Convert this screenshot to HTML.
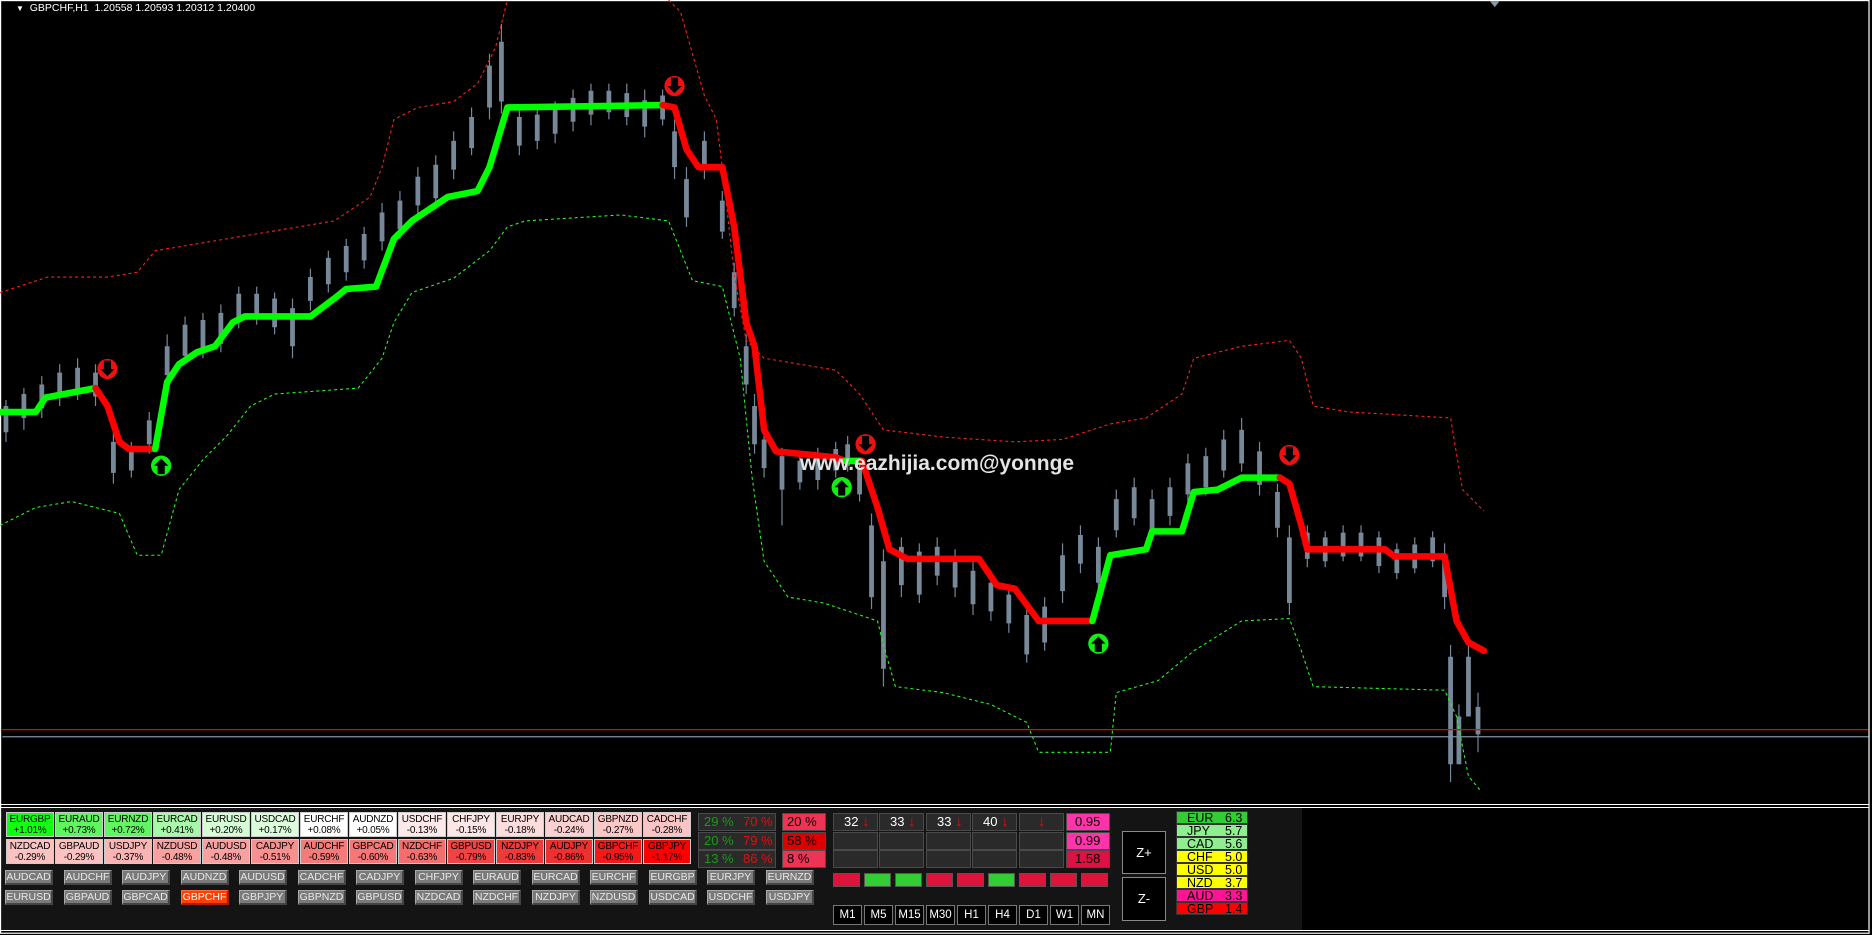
<!DOCTYPE html>
<html><head><meta charset="utf-8"><style>
*{margin:0;padding:0;box-sizing:border-box}
body{width:1872px;height:935px;background:#000;position:relative;overflow:hidden;font-family:"Liberation Sans",sans-serif}
.a{position:absolute}
.t{position:absolute;width:48px;height:25px;font-size:10px;line-height:11px;text-align:center;color:#000;padding-top:1px;border:1px solid #ccc;letter-spacing:-0.2px;white-space:nowrap;overflow:hidden}
.b{position:absolute;width:48px;height:15px;background:#7a7a7a;border-top:1px solid #aaa;border-left:1px solid #aaa;border-right:2px solid #444;border-bottom:2px solid #444;color:#e8e8e8;font-size:10.5px;line-height:12px;text-align:center}
.c{position:absolute;height:18px;border:1px solid #4a4a4a;background:#2a2a2a;font-size:13px;line-height:16px;color:#fff}
.sq{position:absolute;width:27px;height:14px;border:1px solid #555}
.tf{position:absolute;width:29px;height:20px;background:#000;border:1px solid #777;color:#fff;font-size:11.5px;line-height:18px;text-align:center}
.cr{position:absolute;left:1176px;width:72px;height:13px;border:1px solid #333;font-size:12.5px;line-height:12px;color:#000}
.cr span{position:absolute;left:10px}
.cr b{font-weight:normal;position:absolute;left:48px}
.ar{color:#f00;font-size:15px}
</style></head><body>
<svg class="a" style="left:0;top:0" width="1872" height="935" viewBox="0 0 1568 783" preserveAspectRatio="none">
<rect x="0.5" y="0.5" width="1565" height="781" fill="none" stroke="#fff" stroke-width="1"/>
<path d="M1248 1 L1256 1 L1252 6 Z" fill="#8899aa"/>
<g stroke="#778899" fill="none">
<path stroke-width="1" d="M5 335V370M20 325V360M35 315V350M50 305V340M65 300V335M80 305V340M95 360V405M110 370V400M125 345V380M140 280V320M155 265V305M170 262V300M185 255V295M200 240V275M215 240V272M230 245V280M245 250V300M260 225V260M275 210V245M290 200V235M305 190V225M320 170V210M335 160V200M350 140V180M365 130V175M380 110V150M395 90V130M410 45V100M420 20V95M435 90V130M450 90V125M465 85V120M480 75V110M495 70V105M510 70V100M525 70V105M540 75V115M555 75V105M565 100V150M575 140V190M590 110V150M605 160V200M615 220V265M625 280V330M632 330V380M640 360V400M655 375V440M670 380V410M685 375V410M700 370V400M710 365V395M720 385V420M730 430V510M740 460V575M755 450V500M770 455V505M785 450V490M800 460V500M815 470V515M830 480V520M845 490V530M860 505V555M875 500V545M890 455V505M905 440V480M920 450V495M935 410V450M950 400V440M965 410V450M980 400V440M995 380V420M1010 375V415M1025 360V400M1040 350V395M1055 370V415M1070 405V450M1080 440V515M1095 440V475M1110 445V475M1125 440V470M1140 440V470M1155 445V480M1170 455V485M1185 450V480M1200 445V475M1210 455V510M1215 540V655M1222 590V640M1230 540V600M1238 580V630"/>
<path stroke-width="4" d="M5 340V362M20 330V350M35 322V342M50 312V332M65 308V326M80 312V332M95 370V396M110 376V394M125 352V372M140 290V314M155 272V298M170 268V292M185 262V288M200 246V268M215 246V266M230 250V274M245 258V290M260 232V252M275 216V238M290 206V228M305 196V218M320 178V202M335 168V192M350 148V172M365 138V166M380 118V142M395 98V124M410 55V90M420 35V85M435 98V122M450 96V118M465 92V112M480 82V102M495 76V96M510 76V94M525 78V98M540 84V106M555 80V100M565 110V140M575 150V182M590 118V142M605 168V194M615 228V258M625 290V322M632 340V372M640 368V392M655 382V410M670 386V404M685 382V402M700 376V394M710 372V390M720 392V414M730 440V500M740 470V560M755 458V490M770 462V498M785 458V482M800 468V492M815 478V506M830 488V512M845 498V522M860 515V548M875 508V538M890 465V495M905 448V472M920 458V488M935 418V444M950 408V434M965 418V444M980 408V432M995 388V414M1010 382V408M1025 368V394M1040 360V388M1055 378V406M1070 412V442M1080 450V505M1095 446V468M1110 450V470M1125 446V466M1140 446V466M1155 450V474M1170 460V480M1185 456V476M1200 450V470M1210 465V500M1215 550V640M1222 600V640M1230 550V600M1238 592V615"/>
</g>
<polyline fill="none" stroke="#ff2020" stroke-width="0.9" stroke-dasharray="2.5,2.5" points="0,245 40,232 90,232 115,228 130,210 160,205 220,195 280,185 310,165 320,140 330,100 350,90 380,85 400,70 415,40 425,0"/>
<polyline fill="none" stroke="#ff2020" stroke-width="0.9" stroke-dasharray="2.5,2.5" points="560,0 570,10 590,80 600,100 605,140 615,230 625,285 640,300 700,310 720,330 740,360 790,366 850,370 890,368 930,355 960,350 990,330 1000,300 1040,290 1080,285 1090,300 1100,340 1130,345 1215,350 1225,410 1243,428"/>
<polyline fill="none" stroke="#20ff20" stroke-width="0.9" stroke-dasharray="2.5,2.5" points="0,440 30,425 60,420 100,430 115,465 135,465 150,410 170,385 190,365 210,340 230,330 300,325 320,300 330,270 345,245 380,233 410,210 425,190 440,185 520,180 560,185 570,210 580,235 605,240 620,300 630,400 640,470 660,500 690,505 735,520 740,540 750,575 790,580 830,590 860,605 870,630 930,630 935,580 970,570 1000,545 1040,520 1080,518 1090,545 1100,575 1210,578 1220,600 1230,650 1240,662"/>
<line x1="2" y1="611" x2="1565" y2="611" stroke="#ff0000" stroke-width="1"/>
<line x1="2" y1="617" x2="1565" y2="617" stroke="#8090a0" stroke-width="1"/>
<g fill="none" stroke-width="5.5" stroke-linejoin="round" stroke-linecap="round">
<polyline stroke="#00ff00" points="0,345 30,345 38,333 80,325"/>
<polyline stroke="#ff0000" points="80,325 90,340 100,370 108,376 130,376"/>
<polyline stroke="#00ff00" points="130,376 140,320 150,305 165,295 180,290 195,270 205,265 260,265 280,250 290,242 315,240 330,200 345,185 360,175 375,165 400,160 410,140 425,90 555,88"/>
<polyline stroke="#ff0000" points="555,88 565,90 575,125 585,140 605,140 615,190 625,270 632,290 640,360 650,378 700,383 708,386"/>
<polyline stroke="#00ff00" points="708,386 722,386"/>
<polyline stroke="#ff0000" points="722,386 735,425 745,460 760,468 820,468 835,490 850,493 870,520 915,520"/>
<polyline stroke="#00ff00" points="915,520 930,465 960,460 965,445 990,445 1000,412 1020,410 1040,400 1072,400"/>
<polyline stroke="#ff0000" points="1072,400 1080,405 1090,440 1095,460 1160,460 1168,466 1210,466 1220,520 1230,538 1243,545"/>
</g>
<g>
<circle cx="90" cy="309" r="8.5" fill="#ee1111"/><path d="M87 302h6v7h3l-6 6-6-6h3z" fill="#000"/>
<circle cx="565" cy="72" r="8.5" fill="#ee1111"/><path d="M562 65h6v7h3l-6 6-6-6h3z" fill="#000"/>
<circle cx="725" cy="372" r="8.5" fill="#ee1111"/><path d="M722 365h6v7h3l-6 6-6-6h3z" fill="#000"/>
<circle cx="1080" cy="381" r="8.5" fill="#ee1111"/><path d="M1077 374h6v7h3l-6 6-6-6h3z" fill="#000"/>
<circle cx="135" cy="390" r="8.5" fill="#11ee11"/><path d="M132 397h6v-7h3l-6-6-6 6h3z" fill="#000"/>
<circle cx="705" cy="408" r="8.5" fill="#11ee11"/><path d="M702 415h6v-7h3l-6-6-6 6h3z" fill="#000"/>
<circle cx="920" cy="539" r="8.5" fill="#11ee11"/><path d="M917 546h6v-7h3l-6-6-6 6h3z" fill="#000"/>
</g>
</svg>
<div class="a" style="left:16px;top:2px;color:#fff;font-size:10.5px"><span style="font-size:8px">▼</span>&nbsp; GBPCHF,H1&nbsp; 1.20558 1.20593 1.20312 1.20400</div>
<div class="a" style="left:800px;top:452px;color:#e4e4e4;font-size:21px;font-weight:bold">www.eazhijia.com@yonnge</div>

<div class="a" style="left:1px;top:804px;width:1868px;height:1px;background:#fff"></div>
<div class="a" style="left:1px;top:807px;width:1868px;height:1px;background:#fff"></div>
<div class="a" style="left:2px;top:808px;width:1300px;height:122px;background:#141414"></div>
<div class="a" style="left:1px;top:930px;width:1868px;height:1px;background:#fff"></div>

<div class="t" style="left:6px;top:812px;background:#11ff11">EURGBP<br>+1.01%</div>
<div class="t" style="left:55px;top:812px;background:#5ff55f">EURAUD<br>+0.73%</div>
<div class="t" style="left:104px;top:812px;background:#62f562">EURNZD<br>+0.72%</div>
<div class="t" style="left:153px;top:812px;background:#a9f8a9">EURCAD<br>+0.41%</div>
<div class="t" style="left:202px;top:812px;background:#d5fcd5">EURUSD<br>+0.20%</div>
<div class="t" style="left:251px;top:812px;background:#dcfcdc">USDCAD<br>+0.17%</div>
<div class="t" style="left:300px;top:812px;background:#fff">EURCHF<br>+0.08%</div>
<div class="t" style="left:349px;top:812px;background:#fff">AUDNZD<br>+0.05%</div>
<div class="t" style="left:398px;top:812px;background:#fde9e9">USDCHF<br>-0.13%</div>
<div class="t" style="left:447px;top:812px;background:#fde6e6">CHFJPY<br>-0.15%</div>
<div class="t" style="left:496px;top:812px;background:#fcdcdc">EURJPY<br>-0.18%</div>
<div class="t" style="left:545px;top:812px;background:#fbd0d0">AUDCAD<br>-0.24%</div>
<div class="t" style="left:594px;top:812px;background:#fbc8c8">GBPNZD<br>-0.27%</div>
<div class="t" style="left:643px;top:812px;background:#fbc4c4">CADCHF<br>-0.28%</div>
<div class="t" style="left:6px;top:839px;background:#fbc2c2">NZDCAD<br>-0.29%</div>
<div class="t" style="left:55px;top:839px;background:#fbc2c2">GBPAUD<br>-0.29%</div>
<div class="t" style="left:104px;top:839px;background:#fab4b4">USDJPY<br>-0.37%</div>
<div class="t" style="left:153px;top:839px;background:#f9a0a0">NZDUSD<br>-0.48%</div>
<div class="t" style="left:202px;top:839px;background:#f9a0a0">AUDUSD<br>-0.48%</div>
<div class="t" style="left:251px;top:839px;background:#f89090">CADJPY<br>-0.51%</div>
<div class="t" style="left:300px;top:839px;background:#f57a7a">AUDCHF<br>-0.59%</div>
<div class="t" style="left:349px;top:839px;background:#f57777">GBPCAD<br>-0.60%</div>
<div class="t" style="left:398px;top:839px;background:#f46e6e">NZDCHF<br>-0.63%</div>
<div class="t" style="left:447px;top:839px;background:#f04444">GBPUSD<br>-0.79%</div>
<div class="t" style="left:496px;top:839px;background:#ef3a3a">NZDJPY<br>-0.83%</div>
<div class="t" style="left:545px;top:839px;background:#ee3030">AUDJPY<br>-0.86%</div>
<div class="t" style="left:594px;top:839px;background:#f01a1a">GBPCHF<br>-0.95%</div>
<div class="t" style="left:643px;top:839px;background:#ff0000">GBPJPY<br>-1.17%</div>

<div class="b" style="left:5px;top:870px">AUDCAD</div><div class="b" style="left:64px;top:870px">AUDCHF</div><div class="b" style="left:122px;top:870px">AUDJPY</div><div class="b" style="left:181px;top:870px">AUDNZD</div><div class="b" style="left:239px;top:870px">AUDUSD</div><div class="b" style="left:298px;top:870px">CADCHF</div><div class="b" style="left:356px;top:870px">CADJPY</div><div class="b" style="left:415px;top:870px">CHFJPY</div><div class="b" style="left:473px;top:870px">EURAUD</div><div class="b" style="left:532px;top:870px">EURCAD</div><div class="b" style="left:590px;top:870px">EURCHF</div><div class="b" style="left:649px;top:870px">EURGBP</div><div class="b" style="left:707px;top:870px">EURJPY</div><div class="b" style="left:766px;top:870px">EURNZD</div>
<div class="b" style="left:5px;top:890px">EURUSD</div><div class="b" style="left:64px;top:890px">GBPAUD</div><div class="b" style="left:122px;top:890px">GBPCAD</div><div class="b" style="left:181px;top:890px;background:#ff4000;color:#fff;border-color:#ff7040 #a02000 #a02000 #ff7040">GBPCHF</div><div class="b" style="left:239px;top:890px">GBPJPY</div><div class="b" style="left:298px;top:890px">GBPNZD</div><div class="b" style="left:356px;top:890px">GBPUSD</div><div class="b" style="left:415px;top:890px">NZDCAD</div><div class="b" style="left:473px;top:890px">NZDCHF</div><div class="b" style="left:532px;top:890px">NZDJPY</div><div class="b" style="left:590px;top:890px">NZDUSD</div><div class="b" style="left:649px;top:890px">USDCAD</div><div class="b" style="left:707px;top:890px">USDCHF</div><div class="b" style="left:766px;top:890px">USDJPY</div>

<div class="c" style="left:698px;top:813px;width:78px"><span style="color:#1a9a1a;margin-left:5px">29 %</span><span style="color:#e01010;position:absolute;left:44px">70 %</span></div>
<div class="c" style="left:698px;top:832px;width:78px"><span style="color:#1a9a1a;margin-left:5px">20 %</span><span style="color:#e01010;position:absolute;left:44px">79 %</span></div>
<div class="c" style="left:698px;top:850px;width:78px"><span style="color:#1a9a1a;margin-left:5px">13 %</span><span style="color:#e01010;position:absolute;left:44px">86 %</span></div>
<div class="c" style="left:782px;top:813px;width:44px;background:#ee3355;color:#000;padding-left:4px">20 %</div>
<div class="c" style="left:782px;top:832px;width:44px;background:#dd0000;color:#000;padding-left:4px">58 %</div>
<div class="c" style="left:782px;top:850px;width:44px;background:#ee3355;color:#000;padding-left:4px">8 %</div>

<div class="c" style="left:833px;top:813px;width:45px;padding-left:10px">32 <span class="ar">↓</span></div>
<div class="c" style="left:879px;top:813px;width:45px;padding-left:10px">33 <span class="ar">↓</span></div>
<div class="c" style="left:926px;top:813px;width:45px;padding-left:10px">33 <span class="ar">↓</span></div>
<div class="c" style="left:972px;top:813px;width:45px;padding-left:10px">40 <span class="ar">↓</span></div>
<div class="c" style="left:1019px;top:813px;width:45px;padding-left:18px"><span class="ar">↓</span></div>
<div class="c" style="left:833px;top:832px;width:45px"></div><div class="c" style="left:879px;top:832px;width:45px"></div><div class="c" style="left:926px;top:832px;width:45px"></div><div class="c" style="left:972px;top:832px;width:45px"></div><div class="c" style="left:1019px;top:832px;width:45px"></div>
<div class="c" style="left:833px;top:850px;width:45px"></div><div class="c" style="left:879px;top:850px;width:45px"></div><div class="c" style="left:926px;top:850px;width:45px"></div><div class="c" style="left:972px;top:850px;width:45px"></div><div class="c" style="left:1019px;top:850px;width:45px"></div>
<div class="c" style="left:1066px;top:813px;width:44px;background:#ff33aa;color:#000;padding-left:8px">0.95</div>
<div class="c" style="left:1066px;top:832px;width:44px;background:#ff33aa;color:#000;padding-left:8px">0.99</div>
<div class="c" style="left:1066px;top:850px;width:44px;background:#dd1144;color:#000;padding-left:8px">1.58</div>

<div class="sq" style="left:833px;top:873px;background:#dc143c"></div><div class="sq" style="left:864px;top:873px;background:#32cd32"></div><div class="sq" style="left:895px;top:873px;background:#32cd32"></div><div class="sq" style="left:926px;top:873px;background:#dc143c"></div><div class="sq" style="left:957px;top:873px;background:#dc143c"></div><div class="sq" style="left:988px;top:873px;background:#32cd32"></div><div class="sq" style="left:1019px;top:873px;background:#dc143c"></div><div class="sq" style="left:1050px;top:873px;background:#dc143c"></div><div class="sq" style="left:1081px;top:873px;background:#dc143c"></div>

<div class="tf" style="left:833px;top:905px">M1</div><div class="tf" style="left:864px;top:905px">M5</div><div class="tf" style="left:895px;top:905px">M15</div><div class="tf" style="left:926px;top:905px">M30</div><div class="tf" style="left:957px;top:905px">H1</div><div class="tf" style="left:988px;top:905px">H4</div><div class="tf" style="left:1019px;top:905px">D1</div><div class="tf" style="left:1050px;top:905px">W1</div><div class="tf" style="left:1081px;top:905px">MN</div>

<div class="a" style="left:1122px;top:831px;width:44px;height:43px;background:#000;border:1px solid #888;color:#fff;font-size:13px;line-height:41px;text-align:center">Z+</div>
<div class="a" style="left:1122px;top:877px;width:44px;height:44px;background:#000;border:1px solid #888;color:#fff;font-size:13px;line-height:42px;text-align:center">Z-</div>

<div class="cr" style="top:811px;background:#32cd32"><span>EUR</span><b>6.3</b></div>
<div class="cr" style="top:824px;background:#90ee90"><span>JPY</span><b>5.7</b></div>
<div class="cr" style="top:837px;background:#90ee90"><span>CAD</span><b>5.6</b></div>
<div class="cr" style="top:850px;background:#ffff00"><span>CHF</span><b>5.0</b></div>
<div class="cr" style="top:863px;background:#ffff00"><span>USD</span><b>5.0</b></div>
<div class="cr" style="top:876px;background:#ffff00"><span>NZD</span><b>3.7</b></div>
<div class="cr" style="top:889px;background:#ff1493"><span>AUD</span><b>3.3</b></div>
<div class="cr" style="top:902px;background:#ff0000"><span>GBP</span><b>1.4</b></div>
</body></html>
